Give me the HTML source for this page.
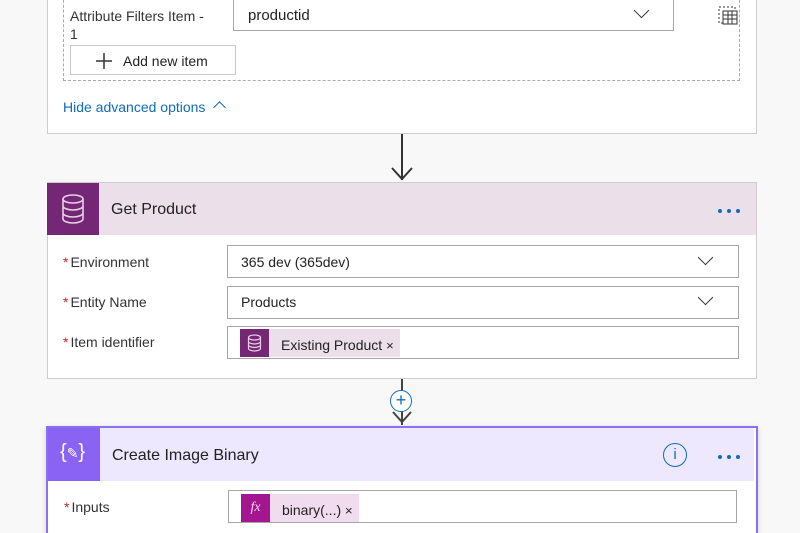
<!DOCTYPE html><html><head><style>
html,body{margin:0;width:800px;height:533px;overflow:hidden}
body{background:#f8f8f8;font-family:"Liberation Sans",sans-serif;position:relative;font-size:14px;color:#222}
.a{position:absolute}
.inp{position:absolute;background:#fff;border:1px solid #a6a6a6;box-sizing:border-box}
.chev{position:absolute;width:10px;height:10px;border-right:1.6px solid #333;border-bottom:1.6px solid #333;transform:rotate(45deg)}
.lbl{position:absolute;font-size:14px;color:#333}
.lbl b{color:#c4262e;font-weight:normal;margin-right:2px}
.dot{position:absolute;width:4px;height:4px;border-radius:50%;background:#0f6cbd}
</style></head><body>
<div class="a" style="left:47px;top:-2px;width:710px;height:136px;background:#fff;border:1px solid #cdcdcd;box-sizing:border-box"></div>
<div class="a" style="left:63px;top:-5px;width:677px;height:86px;border:1px dashed #aaa;box-sizing:border-box"></div>
<div class="lbl" style="left:70px;top:7px;line-height:18px">Attribute Filters Item -<br>1</div>
<div class="inp" style="left:233px;top:-3px;width:441px;height:34px"></div>
<div class="a" style="left:248px;top:7px;font-size:15px">productid</div>
<div class="chev" style="left:636px;top:5px"></div>
<svg class="a" style="left:718px;top:6px" width="22" height="20"><rect x="1" y="1" width="16" height="16" fill="none" stroke="#333" stroke-dasharray="2,2"/><rect x="5" y="5" width="14" height="13" fill="#fff" stroke="#333"/><path d="M5 9h14M5 13h14M10 5v13M14 5v13" stroke="#333"/></svg>
<div class="a" style="left:70px;top:45px;width:166px;height:30px;border:1px solid #c8c8c8;box-sizing:border-box;background:#fff"></div>
<svg class="a" style="left:94px;top:51px" width="20" height="20"><path d="M10 2v16M2 10h16" stroke="#333" stroke-width="1.5"/></svg>
<div class="a" style="left:123px;top:53px;font-size:14px">Add new item</div>
<div class="a" style="left:63px;top:99px;color:#0f6cbd;font-size:14px">Hide advanced options</div>
<div class="chev" style="left:215px;top:103px;transform:rotate(225deg);border-color:#0f6cbd;width:8px;height:8px"></div>
<div class="a" style="left:401px;top:134px;width:2px;height:46px;background:#333"></div>
<svg class="a" style="left:390px;top:166px" width="24" height="16"><path d="M2 2l10 11 10-11" fill="none" stroke="#333" stroke-width="2"/></svg>

<div class="a" style="left:47px;top:182px;width:710px;height:197px;background:#fff;border:1px solid #cdcdcd;box-sizing:border-box"></div>
<div class="a" style="left:48px;top:183px;width:708px;height:52px;background:#ebdfe9"></div>
<div class="a" style="left:47px;top:183px;width:52px;height:52px;background:#742774"></div>
<svg class="a" style="left:60px;top:193px" width="26" height="32"><g fill="none" stroke="#e8cfe6" stroke-width="1.6"><ellipse cx="13" cy="6" rx="10" ry="4"/><path d="M3 6v20c0 2 4.5 4 10 4s10-2 10-4V6M3 13c0 2 4.5 4 10 4s10-2 10-4M3 20c0 2 4.5 4 10 4s10-2 10-4"/></g></svg>
<div class="a" style="left:111px;top:201px;font-size:16px">Get Product</div>
<div class="dot" style="left:718px;top:209px"></div><div class="dot" style="left:727px;top:209px"></div><div class="dot" style="left:736px;top:209px"></div>
<div class="lbl" style="left:63px;top:254px"><b>*</b>Environment</div>
<div class="inp" style="left:227px;top:245px;width:512px;height:33px"></div>
<div class="a" style="left:241px;top:254px">365 dev (365dev)</div>
<div class="chev" style="left:700px;top:252px"></div>
<div class="lbl" style="left:63px;top:294px"><b>*</b>Entity Name</div>
<div class="inp" style="left:227px;top:286px;width:512px;height:33px"></div>
<div class="a" style="left:241px;top:294px">Products</div>
<div class="chev" style="left:700px;top:292px"></div>
<div class="lbl" style="left:63px;top:334px"><b>*</b>Item identifier</div>
<div class="inp" style="left:227px;top:326px;width:512px;height:33px"></div>
<div class="a" style="left:240px;top:329px;width:160px;height:28px;background:#ebdfe9"></div>
<div class="a" style="left:240px;top:329px;width:29px;height:28px;background:#742774"></div>
<svg class="a" style="left:247px;top:334px" width="15" height="18"><g fill="none" stroke="#e8cfe6" stroke-width="1.2"><ellipse cx="7.5" cy="3.5" rx="6" ry="2.5"/><path d="M1.5 3.5v11c0 1.3 2.7 2.5 6 2.5s6-1.2 6-2.5v-11M1.5 7.5c0 1.3 2.7 2.5 6 2.5s6-1.2 6-2.5M1.5 11c0 1.3 2.7 2.5 6 2.5s6-1.2 6-2.5"/></g></svg>
<div class="a" style="left:281px;top:337px">Existing Product <span style="font-size:13px">×</span></div>

<div class="a" style="left:401px;top:379px;width:2px;height:46px;background:#444"></div>
<svg class="a" style="left:391px;top:410px" width="22" height="15"><path d="M2 2l9 10 9-10" fill="none" stroke="#444" stroke-width="2"/></svg>
<div class="a" style="left:390px;top:390px;width:20px;height:20px;border:1.5px solid #0f6cbd;border-radius:50%;background:#fff;color:#0f6cbd;text-align:center;line-height:19px;font-size:18px">+</div>

<div class="a" style="left:46px;top:426px;width:712px;height:120px;background:#fff;border:2px solid #8a6ff0;box-sizing:border-box;box-shadow:0 2px 6px rgba(0,0,0,.15)"></div>
<div class="a" style="left:48px;top:428px;width:706px;height:53px;background:#ede8fd"></div>
<div class="a" style="left:48px;top:428px;width:52px;height:53px;background:#8a63f5"></div>
<div class="a" style="left:60px;top:441px;color:#fff;font-size:20px">{<span style="font-size:14px">✎</span>}</div>
<div class="a" style="left:112px;top:447px;font-size:16px">Create Image Binary</div>
<div class="a" style="left:663px;top:443px;width:22px;height:22px;border:1.6px solid #0f6cbd;border-radius:50%;color:#0f6cbd;text-align:center;line-height:22px;font-size:15px">i</div>
<div class="dot" style="left:718px;top:455px"></div><div class="dot" style="left:727px;top:455px"></div><div class="dot" style="left:736px;top:455px"></div>
<div class="lbl" style="left:64px;top:499px"><b>*</b>Inputs</div>
<div class="inp" style="left:228px;top:490px;width:509px;height:33px"></div>
<div class="a" style="left:241px;top:494px;width:118px;height:28px;background:#f1dcef"></div>
<div class="a" style="left:241px;top:494px;width:29px;height:28px;background:#a4168f;color:#f5d7ef;font-family:'Liberation Serif',serif;font-style:italic;text-align:center;line-height:28px;font-size:14px">fx</div>
<div class="a" style="left:282px;top:502px">binary(...) <span style="font-size:13px">×</span></div>
</body></html>
